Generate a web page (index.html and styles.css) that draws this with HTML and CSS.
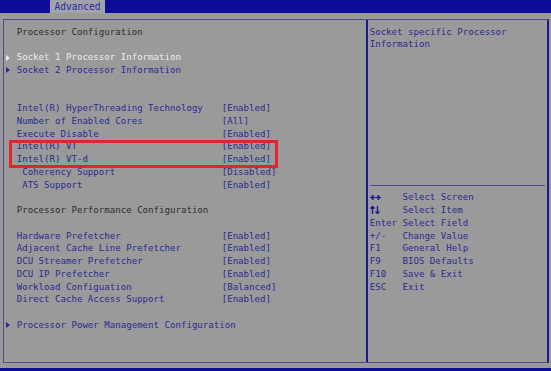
FILE: index.html
```html
<!DOCTYPE html>
<html lang="en">
<head>
    <meta charset="UTF-8">
    <meta name="viewport" content="width=device-width, initial-scale=1.0">
    <title>Advanced - Processor Configuration</title>
    <link rel="stylesheet" href="styles.css">
</head>
<body>

    <div class="topbar">
        <div class="tab">Advanced</div>
    </div>

    <div class="frame">
        <div class="main">
            <div class="row title">Processor Configuration</div>
            <div class="row"></div>
            <div class="row sub active">Socket 1 Processor Information</div>
            <div class="row sub">Socket 2 Processor Information</div>
            <div class="row"></div>
            <div class="row"></div>
            <div class="row opt"><span>Intel(R) HyperThreading Technology</span><span>[Enabled]</span></div>
            <div class="row opt"><span>Number of Enabled Cores</span><span>[All]</span></div>
            <div class="row opt"><span>Execute Disable</span><span>[Enabled]</span></div>
            <div class="row opt"><span>Intel(R) VT</span><span>[Enabled]</span></div>
            <div class="row opt"><span>Intel(R) VT-d</span><span>[Enabled]</span></div>
            <div class="row opt"><span>&nbsp;Coherency Support</span><span>[Disabled]</span></div>
            <div class="row opt"><span>&nbsp;ATS Support</span><span>[Enabled]</span></div>
            <div class="row"></div>
            <div class="row title">Processor Performance Configuration</div>
            <div class="row"></div>
            <div class="row opt"><span>Hardware Prefetcher</span><span>[Enabled]</span></div>
            <div class="row opt"><span>Adjacent Cache Line Prefetcher</span><span>[Enabled]</span></div>
            <div class="row opt"><span>DCU Streamer Prefetcher</span><span>[Enabled]</span></div>
            <div class="row opt"><span>DCU IP Prefetcher</span><span>[Enabled]</span></div>
            <div class="row opt"><span>Workload Configuation</span><span>[Balanced]</span></div>
            <div class="row opt"><span>Direct Cache Access Support</span><span>[Enabled]</span></div>
            <div class="row"></div>
            <div class="row sub">Processor Power Management Configuration</div>
        </div>

        <div class="side">
            <div class="help">
                <div class="row">Socket specific Processor</div>
                <div class="row">Information</div>
            </div>
            <div class="keys">
                <div class="key">
                    <span><svg width="11" height="7" viewBox="0 0 11 7"><path d="M0 3.5H11M3 1V6M8 1V6M1.5 2L3 3.5L1.5 5M9.5 2L8 3.5L9.5 5" stroke="#1c1c8c" stroke-width="1.2" fill="none"/></svg></span>
                    <span>Select Screen</span>
                </div>
                <div class="key">
                    <span><svg width="10" height="8" viewBox="0 0 10 8"><path d="M2.5 8V0.5M0.5 2.5L2.5 0.5L4.5 2.5M7.5 0V7.5M5.5 5.5L7.5 7.5L9.5 5.5" stroke="#1c1c8c" stroke-width="1.4" fill="none"/></svg></span>
                    <span>Select Item</span>
                </div>
                <div class="key"><span>Enter</span><span>Select Field</span></div>
                <div class="key"><span>+/-</span><span>Change Value</span></div>
                <div class="key"><span>F1</span><span>General Help</span></div>
                <div class="key"><span>F9</span><span>BIOS Defaults</span></div>
                <div class="key"><span>F10</span><span>Save &amp; Exit</span></div>
                <div class="key"><span>ESC</span><span>Exit</span></div>
            </div>
        </div>
    </div>

    <div class="bottombar"></div>

    <!-- marca sobre las opciones de virtualizacion -->
    <div class="highlight"></div>

</body>
</html>
```

FILE: styles.css
```css
body {
    font-family: "DejaVu Sans Mono", "Liberation Mono", monospace;
    font-size: 9.1px;
    background-color: #9a9a9a;
    color: #2a2a92;
    margin: 0;
    width: 551px;
    height: 371px;
    position: relative;
    overflow: hidden;
}

.topbar {
    height: 13px;
    background-color: #0c0c98;
    padding-left: 50px;
}

.tab {
    width: 55px;
    height: 13px;
    line-height: 13px;
    background-color: #a2a2aa;
    color: #2a2a9a;
    text-align: center;
    font-size: 9.6px;
}

.frame {
    display: flex;
    margin: 6px 2px 0 3px;
    height: 342px;
    border: 1px solid #4c4c8e;
    border-right: 2px solid #1a1a8c;
}

.row {
    height: 12.75px;
    line-height: 12.75px;
    white-space: pre;
}

.main {
    width: 349px;
    padding: 5.6px 0 0 12.7px;
}

.title {
    color: #2c2c2c;
}

.opt {
    display: grid;
    grid-template-columns: 205px auto;
}

.sub {
    margin-left: -11px;
}

.sub::before {
    content: "";
    display: inline-block;
    border-left: 4px solid #2a2a92;
    border-top: 3px solid transparent;
    border-bottom: 3px solid transparent;
    margin-right: 7px;
    vertical-align: -0.5px;
}

.sub.active {
    color: #ececec;
}

.sub.active::before {
    border-left-color: #ececec;
}

.side {
    flex: 1;
    border-left: 2px solid #1a1a8c;
    padding: 5.6px 2px 0 2px;
}

.help {
    height: 159.4px;
    border-bottom: 1px solid #4c4c8e;
}

.keys {
    padding-top: 5.3px;
}

.key {
    display: grid;
    grid-template-columns: 32.8px auto;
    height: 12.75px;
    line-height: 12.75px;
    white-space: pre;
}

.key svg {
    vertical-align: -0.5px;
}

.bottombar {
    position: absolute;
    left: 0;
    right: 0;
    bottom: 0;
    height: 3px;
    background-color: #0c0c98;
}

.highlight {
    position: absolute;
    left: 9px;
    top: 140px;
    width: 263px;
    height: 22px;
    border: 3px solid #e0262c;
}
```
